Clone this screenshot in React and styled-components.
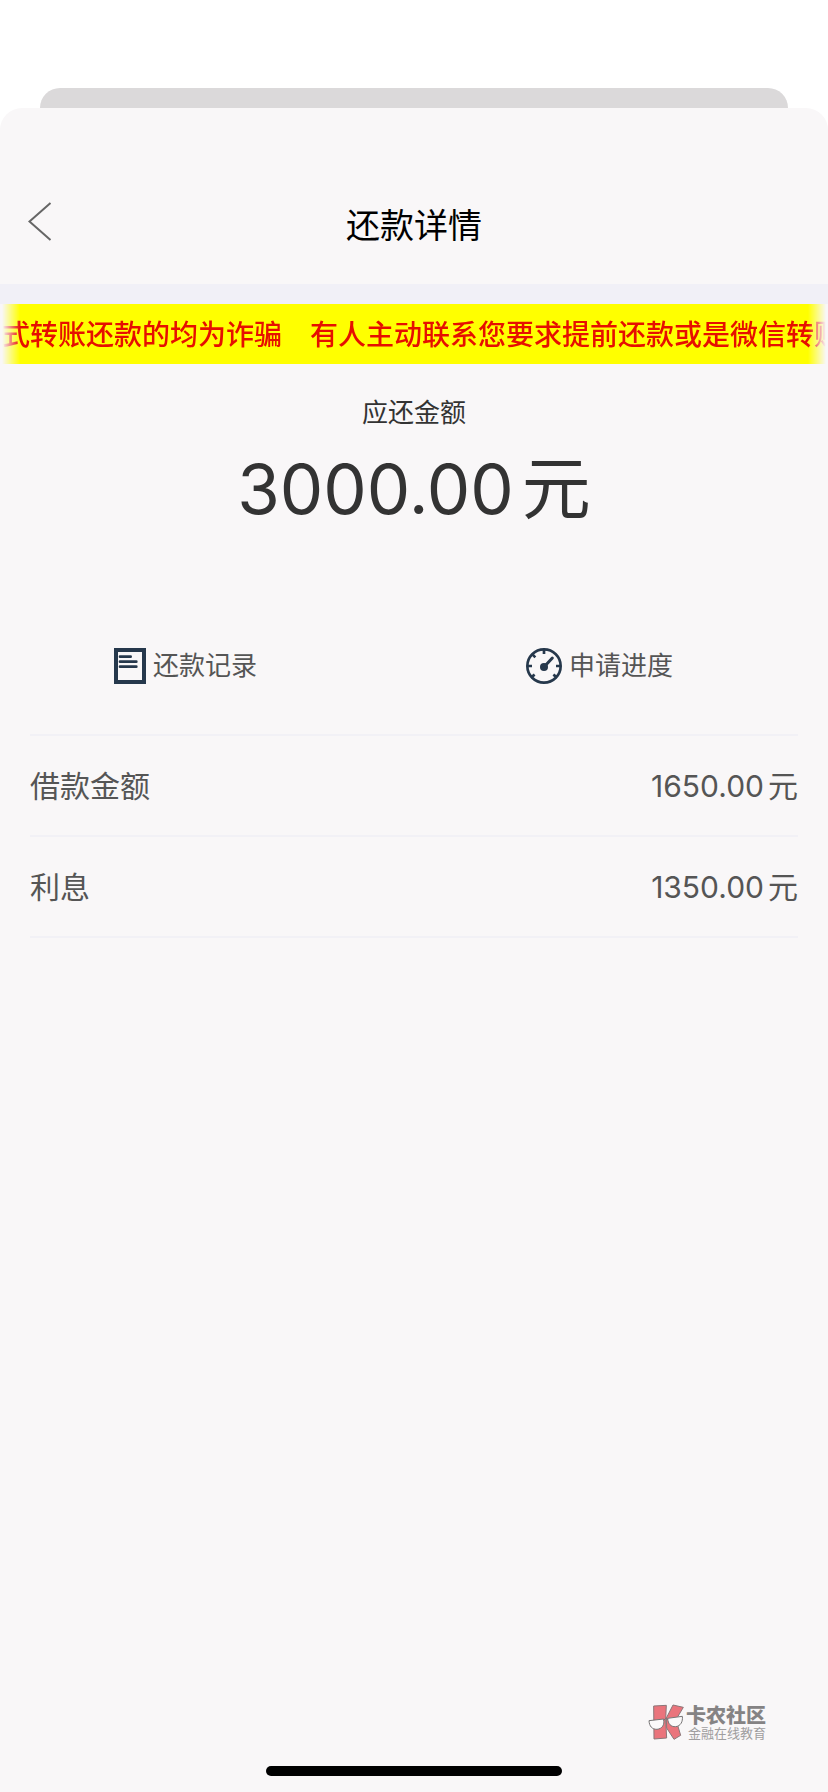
import React from "react";
import styled, { createGlobalStyle } from "styled-components";

const GlobalStyle = createGlobalStyle`
  * {
    box-sizing: border-box;
  }
  body {
    margin: 0;
    background: #ffffff;
    font-family: Inter, "Noto Sans CJK SC", sans-serif;
  }
`;

const Screen = styled.div`
  display: flex;
  flex-direction: column;
  min-height: 100vh;
  padding-top: 88px;
`;

const BackCard = styled.div`
  height: 20px;
  margin: 0 40px;
  border-radius: 20px 20px 0 0;
  background: #dbd9da;
`;

const Sheet = styled.main`
  display: flex;
  flex-direction: column;
  flex: 1;
  border-radius: 22px 22px 0 0;
  background: #f9f7f8;
`;

const Header = styled.header`
  display: grid;
  grid-template-columns: 80px 1fr 80px;
  align-items: center;
  padding: 90px 0 30px;
  border-bottom: 20px solid #f1f0f7;
`;

const BackButton = styled.button`
  display: flex;
  justify-content: center;
  padding: 0;
  border: 0;
  background: none;
  cursor: pointer;
`;

const Title = styled.h1`
  margin: 0;
  color: #000000;
  font-size: 34px;
  font-weight: 400;
  line-height: 56px;
  text-align: center;
`;

const Notice = styled.div`
  display: flex;
  gap: 28px;
  padding: 2px 0 0 2px;
  overflow: hidden;
  background: #ffff00;
  color: #e60f00;
  font-size: 28px;
  font-weight: 500;
  line-height: 58px;
  white-space: nowrap;
  mask-image: linear-gradient(
    to right,
    transparent 2px,
    #000 20px,
    #000 calc(100% - 20px),
    transparent calc(100% - 2px)
  );
`;

const NoticeText = styled.span`
  flex: none;
`;

const Summary = styled.section`
  padding-top: 31px;
  color: #333333;
  text-align: center;
`;

const SummaryLabel = styled.div`
  font-size: 26px;
  line-height: 36px;
`;

const SummaryAmount = styled.div`
  display: flex;
  justify-content: center;
  gap: 8px;
  margin-top: 18px;
  font-size: 69px;
  line-height: 80px;
`;

const Actions = styled.nav`
  display: grid;
  grid-template-columns: 1fr 1fr;
  margin: 119px 0 50px;
`;

const ActionButton = styled.button`
  display: flex;
  align-items: center;
  justify-content: center;
  gap: 7px;
  padding: 0 43px 0 0;
  border: 0;
  background: none;
  color: #555555;
  font-family: inherit;
  font-size: 26px;
  line-height: 36px;
  cursor: pointer;
`;

const DetailList = styled.dl`
  margin: 0 30px;
  border-top: 2px solid #f2f1f6;
`;

const DetailRow = styled.div`
  display: flex;
  align-items: center;
  justify-content: space-between;
  height: 101px;
  border-bottom: 2px solid #f2f1f6;
  color: #555555;
  font-size: 30px;
  line-height: 40px;
`;

const DetailName = styled.dt`
  margin: 0;
`;

const DetailValue = styled.dd`
  display: flex;
  gap: 4px;
  margin: 0;
`;

const Footer = styled.footer`
  display: flex;
  flex-direction: column;
  gap: 26px;
  margin-top: auto;
  padding-bottom: 16px;
`;

const Brand = styled.div`
  display: flex;
  align-items: center;
  align-self: flex-end;
  gap: 2px;
  margin-right: 62px;
`;

const BrandText = styled.div`
  display: flex;
  flex-direction: column;
  align-items: flex-end;
`;

const BrandName = styled.span`
  color: #858384;
  font-size: 20px;
  font-weight: 900;
  line-height: 22px;
`;

const BrandSlogan = styled.span`
  color: #a09e9f;
  font-size: 13px;
  line-height: 12px;
`;

const HomeBar = styled.div`
  align-self: center;
  width: 296px;
  height: 10px;
  border-radius: 5px;
  background: #000000;
`;

const BackIcon = () => (
  <svg width="24" height="48" viewBox="0 0 24 48" fill="none" aria-hidden="true">
    <path d="M22.5 1 L1.5 19.5 L22.5 38" stroke="#666666" strokeWidth="2" />
  </svg>
);

const RecordIcon = () => (
  <svg width="32" height="36" viewBox="0 0 96 108" fill="none" stroke="#26384c" aria-hidden="true">
    <rect x="6" y="6" width="84" height="96" strokeWidth="12" />
    <path d="M18 26H50M18 41H67M18 56H67" strokeWidth="8" strokeLinecap="round" />
  </svg>
);

const ProgressIcon = () => (
  <svg
    width="36"
    height="36"
    viewBox="0 0 108 108"
    fill="none"
    stroke="#26384c"
    strokeWidth="8"
    aria-hidden="true"
  >
    <circle cx="54" cy="54" r="50" />
    <path d="M54 4V18M4 54H18M90 54H104M20 20L28 28M15 88L26 80M93 88L82 80" />
    <path d="M54 57L79 30" strokeWidth="9" strokeLinecap="round" />
    <circle cx="54" cy="57" r="12" fill="#26384c" stroke="none" />
  </svg>
);

const BrandIcon = () => (
  <svg width="36" height="36" viewBox="0 0 108 108" strokeLinejoin="round" aria-hidden="true">
    <g fill="#ea747c" stroke="#8b7779" strokeWidth="3">
      <path d="M17 6L55 4L53 47L56 102L18 105Z" />
      <path d="M55 42L75 3L106 10L84 47L98 94L78 106L56 72Z" />
    </g>
    <g fill="#fbf9fa" stroke="#777576" strokeWidth="3">
      <path d="M3 50L47 45C50 63 43 74 27 76C12 76 4 67 3 50Z" />
      <path d="M59 43L103 37C105 53 98 66 83 68C69 69 60 60 59 43Z" />
    </g>
    <path d="M46 49Q53 40 60 46" fill="none" stroke="#777576" strokeWidth="3" />
  </svg>
);

const details = [
  { name: "借款金额", value: "1650.00" },
  { name: "利息", value: "1350.00" },
];

class App extends React.Component {
  render() {
    return (
      <Screen>
        <GlobalStyle />
        <BackCard />
        <Sheet>
          <Header>
            <BackButton type="button" aria-label="返回">
              <BackIcon />
            </BackButton>
            <Title>还款详情</Title>
          </Header>

          <Notice>
            <NoticeText>式转账还款的均为诈骗</NoticeText>
            <NoticeText>有人主动联系您要求提前还款或是微信转账</NoticeText>
          </Notice>

          <Summary>
            <SummaryLabel>应还金额</SummaryLabel>
            <SummaryAmount>
              <span>3000.00</span>
              <span>元</span>
            </SummaryAmount>
          </Summary>

          <Actions>
            <ActionButton type="button">
              <RecordIcon />
              还款记录
            </ActionButton>
            <ActionButton type="button">
              <ProgressIcon />
              申请进度
            </ActionButton>
          </Actions>

          <DetailList>
            {details.map((item) => (
              <DetailRow key={item.name}>
                <DetailName>{item.name}</DetailName>
                <DetailValue>
                  <span>{item.value}</span>
                  <span>元</span>
                </DetailValue>
              </DetailRow>
            ))}
          </DetailList>

          <Footer>
            <Brand>
              <BrandIcon />
              <BrandText>
                <BrandName>卡农社区</BrandName>
                <BrandSlogan>金融在线教育</BrandSlogan>
              </BrandText>
            </Brand>
            <HomeBar />
          </Footer>
        </Sheet>
      </Screen>
    );
  }
}

export default App;
